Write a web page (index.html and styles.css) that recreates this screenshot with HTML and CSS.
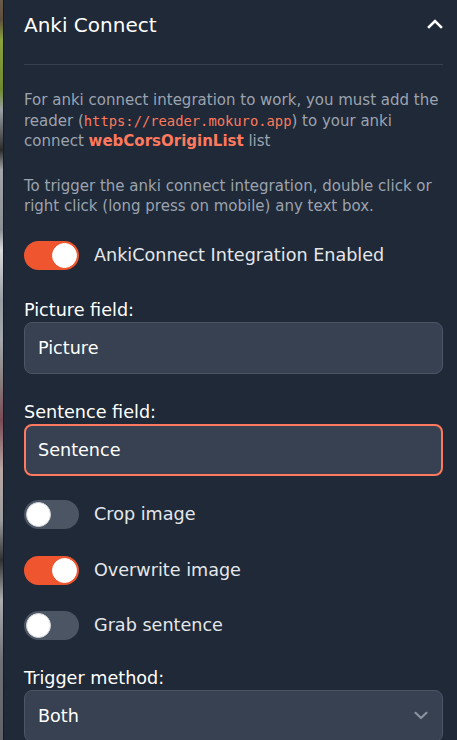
FILE: index.html
```html
<!DOCTYPE html>
<html lang="en">
<head>
<meta charset="utf-8">
<title>Anki Connect</title>
<link rel="stylesheet" href="styles.css">
</head>
<body>
<div class="page">
  <div class="strip"></div>
  <div class="panel">
    <div class="header">
      <h2 class="title">Anki Connect</h2>
      <svg class="chev-up" width="16" height="10" viewBox="0 0 16 10"><path d="M2 8 L8 2 L14 8" fill="none" stroke="#ffffff" stroke-width="2.6" stroke-linecap="square"/></svg>
    </div>
    <div class="rule"></div>
    <p class="note">For anki connect integration to work, you must add the reader (<code>https://reader.mokuro.app</code>) to your anki connect <b class="hl">webCorsOriginList</b> list</p>
    <p class="note note2">To trigger the anki connect integration, double click or right click (long press on mobile) any text box.</p>

    <label class="toggle-row first">
      <span class="track on"><span class="knob"></span></span>
      <span class="toggle-label">AnkiConnect Integration Enabled</span>
    </label>

    <div class="field">
      <div class="field-label">Picture field:</div>
      <div class="input">Picture</div>
    </div>

    <div class="field">
      <div class="field-label">Sentence field:</div>
      <div class="input focused">Sentence</div>
    </div>

    <label class="toggle-row t-crop">
      <span class="track"><span class="knob"></span></span>
      <span class="toggle-label">Crop image</span>
    </label>
    <label class="toggle-row">
      <span class="track on"><span class="knob"></span></span>
      <span class="toggle-label">Overwrite image</span>
    </label>
    <label class="toggle-row t-grab">
      <span class="track"><span class="knob"></span></span>
      <span class="toggle-label">Grab sentence</span>
    </label>

    <div class="field trigger">
      <div class="field-label">Trigger method:</div>
      <div class="input select">
        <span>Both</span>
        <svg class="chev-down" width="14" height="9" viewBox="0 0 14 9"><path d="M1.5 1.8 L7 7 L12.5 1.8" fill="none" stroke="#8b93a1" stroke-width="2.2" stroke-linecap="round" stroke-linejoin="round"/></svg>
      </div>
    </div>
  </div>
</div>
</body>
</html>
```

FILE: styles.css
```css
* { box-sizing: border-box; }
html, body {
  margin: 0;
  padding: 0;
  height: 100%;
  overflow: hidden;
  background: #1f2937;
}
body {
  font-family: "DejaVu Sans", "Verdana", sans-serif;
  color: #ffffff;
}
.page {
  display: flex;
  min-height: 740px;
}
.strip {
  width: 4px;
  flex: none;
  background: linear-gradient(to bottom,
    #6b5a48 0px, #5d4f3f 20px, #8aa33c 40px, #6f8a2e 90px,
    #9aa0a6 110px, #2b2b2b 150px, #a3a6aa 170px, #8b9096 230px,
    #d7d9db 250px, #999ea4 300px, #a4a8ac 340px, #8a7f80 380px,
    #7a4b55 420px, #b9a7a4 470px, #9c9ea0 520px, #2e3134 560px,
    #a9adb0 600px, #6e7276 660px, #5f6367 740px);
  border-right: 1px solid #151c26;
}
.panel {
  flex: 1;
  padding: 0 14px 0 20px;
  min-width: 0;
}
.header {
  height: 50px;
  display: flex;
  align-items: center;
  justify-content: space-between;
}
.title {
  margin: 0;
  font-size: 20px;
  line-height: 28px;
  font-weight: 500;
  color: #ffffff;
}
.chev-up { margin-top: -3px; }
.rule {
  margin-top: 14px;
  border-top: 1px solid #374151;
}
.note {
  margin: 25px 0 0;
  font-size: 15px;
  line-height: 20.5px;
  color: #9ca3af;
}
.note2 { margin-top: 24px; }
code {
  font-family: "DejaVu Sans Mono", monospace;
  font-size: 13.8px;
  line-height: 1;
  color: #fe795d;
}
.hl {
  font-size: 15px;
  line-height: 1;
  font-weight: 700;
  color: #fe795d;
}
.toggle-row {
  display: flex;
  align-items: center;
  gap: 15px;
  margin-top: 27px;
  height: 29px;
}
.toggle-row.first { margin-top: 24px; }
.toggle-row.t-crop { margin-top: 24px; }
.toggle-row.t-grab { margin-top: 26px; }
.track {
  position: relative;
  width: 55px;
  height: 29px;
  border-radius: 15px;
  background: #4b5563;
  flex: none;
}
.track.on { background: #ef562f; }
.knob {
  position: absolute;
  top: 2px;
  left: 2px;
  width: 25px;
  height: 25px;
  border-radius: 50%;
  background: #ffffff;
  border: 1px solid #d1d5db;
}
.track.on .knob {
  left: 28px;
  border-color: #ffffff;
}
.toggle-label {
  font-size: 17.6px;
  line-height: 24px;
  color: #e5e7eb;
}
.field { margin-top: 28px; }
.field + .field { margin-top: 26px; }
.field-label {
  font-size: 17.6px;
  line-height: 24px;
  font-weight: 500;
  color: #ffffff;
}
.input {
  height: 52px;
  border: 1px solid #4b5563;
  border-radius: 8px;
  background: #374151;
  padding: 0 13px;
  display: flex;
  align-items: center;
  font-size: 17.6px;
  color: #ffffff;
}
.input.focused {
  border: 2px solid #fe795d;
  padding: 0 12px;
}
.field.trigger { margin-top: 26px; }
.select { justify-content: space-between; }
.chev-down { margin-right: 1px; }
```
